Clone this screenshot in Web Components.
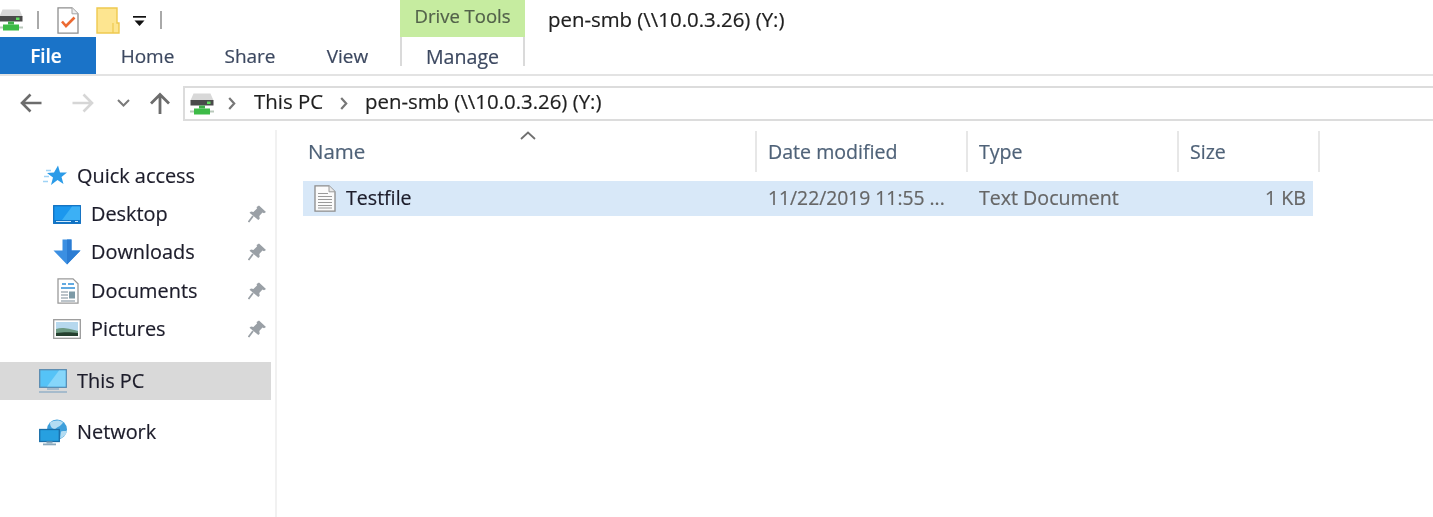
<!DOCTYPE html>
<html>
<head>
<meta charset="utf-8">
<title>pen-smb</title>
<style>
  html, body { margin: 0; height: 100%; background: #fff; overflow: hidden; }
  body { font: 19.6px "Open Sans", "Noto Sans", sans-serif; color: #1a1a1a; -webkit-text-stroke: 0.2px; }
  ex-window { filter: blur(0.45px); }
</style>
</head>
<body>
<ex-window></ex-window>

<script>
const ICONS = {
  drive: `<svg width="24" height="23" viewBox="0 0 24 23">
    <path d="M3.500 .5h17l3 7H.5z" fill="#d8d8d8"/>
    <rect x=".5" y="7" width="23" height="5.500" fill="#4a4a4a"/>
    <rect x="17" y="8.500" width="3.500" height="2.500" fill="#5fdc5f"/>
    <rect x="9" y="12.500" width="6" height="3" fill="#3fae49"/>
    <rect x="4" y="15.500" width="16" height="6" fill="#3dbb47"/>
    <rect x="0" y="17.500" width="4" height="2" fill="#b9c9bb"/>
    <rect x="20" y="17.500" width="4" height="2" fill="#b9c9bb"/>
  </svg>`,
  checklist: `<svg width="22" height="27" viewBox="0 0 22 27">
    <path d="M1 .8h14l6 6v19.400H1z" fill="#fff" stroke="#8e8e8e" stroke-width="1.300"/>
    <path d="M15 .8v6h6" fill="#eee" stroke="#a5a5a5"/>
    <path d="M5 14.500l4 4.500 8.500-8.500" fill="none" stroke="#ec6a32" stroke-width="2.600"/>
  </svg>`,
  folder: `<svg width="24" height="27" viewBox="0 0 24 27">
    <path d="M1 1h20v15h2v10H1z" fill="#fde590" stroke="#eec94f" stroke-width="1.400"/>
    <path d="M17 16v10" stroke="#eec94f" stroke-width="1.200"/>
  </svg>`,
  dropdown: `<svg width="13" height="11" viewBox="0 0 13 11">
    <rect x="0" y="0" width="13" height="1.700" fill="#111"/>
    <path d="M1.500 4.500h10L6.500 10z" fill="#111"/>
  </svg>`,
  back: `<svg width="22" height="20" viewBox="0 0 22 20"><path d="M21.500 10H2.500M10.500 1.500L2 10l8.500 8.500" fill="none" stroke="currentColor" stroke-width="2.600"/></svg>`,
  forward: `<svg width="22" height="20" viewBox="0 0 22 20"><path d="M.5 10h19M11.500 1.500L20 10l-8.500 8.500" fill="none" stroke="currentColor" stroke-width="2.600"/></svg>`,
  up: `<svg width="22" height="22" viewBox="0 0 22 22"><path d="M11 22V3M2 11.500L11 2.500l9 9" fill="none" stroke="currentColor" stroke-width="2.800"/></svg>`,
  chevdown: `<svg width="13" height="8" viewBox="0 0 13 8"><path d="M1 1l5.500 5.500L12 1" fill="none" stroke="currentColor" stroke-width="2"/></svg>`,
  chevright: `<svg width="8" height="13" viewBox="0 0 8 13"><path d="M1.200 1l5 5.500-5 5.500" fill="none" stroke="currentColor" stroke-width="2.200"/></svg>`,
  star: `<svg width="24" height="22" viewBox="0 0 24 22">
    <path d="M15 .5l2 7h7l-5.500 4.500 2 7-6-4-6.500 5 2-7.500-6-4.500 7-.5z" fill="#2b9be8"/>
    <path d="M0 16.500h5M1 11.500h5M3 5.500h5" stroke="#9fd3f5" stroke-width="1.300"/>
  </svg>`,
  desktop: `<svg width="28" height="19" viewBox="0 0 28 19">
    <rect x=".7" y=".7" width="26.600" height="17.600" fill="#1b97ee" stroke="#0f6fc0" stroke-width="1.300"/>
    <path d="M19 1.500L9 15h18V1.500z" fill="#3cb0f5"/>
    <rect x="1.500" y="15" width="25" height="3" fill="#0f72c4"/>
    <rect x="3" y="16" width="15" height="1" fill="#cfe9fb"/>
    <rect x="22" y="16" width="3" height="1" fill="#cfe9fb"/>
  </svg>`,
  downloads: `<svg width="28" height="26" viewBox="0 0 28 26">
    <path d="M9.500 .5h9v11h9L14 25.500.5 11.500h9z" fill="#3b8fe2"/>
    <path d="M14 .5h4.500v11h9L14 25.500z" fill="#2b7cd3"/>
  </svg>`,
  documents: `<svg width="22" height="26" viewBox="0 0 22 26">
    <path d="M1 .8h15l5 5v19.400H1z" fill="#fff" stroke="#9a9a9a" stroke-width="1.300"/>
    <path d="M5 6h4M11 6h6M4 10h14" stroke="#2f8fd8" stroke-width="1.500"/>
    <path d="M4 14h7M4 17h7M4 20h7M4 23h14" stroke="#7a8a96" stroke-width="1.200"/>
    <rect x="12" y="13.500" width="6" height="7" fill="#7d9aa6"/>
  </svg>`,
  pictures: `<svg width="28" height="20" viewBox="0 0 28 20">
    <rect x=".7" y=".7" width="26.600" height="18.600" fill="#fff" stroke="#9a9a9a" stroke-width="1.300"/>
    <rect x="3" y="3" width="22" height="14" fill="#b6d8ee"/>
    <path d="M3 10c6-2 11-1 22 2v5H3z" fill="#6d9a83"/>
    <path d="M3 14c8-1 14-1 22 0v3H3z" fill="#25402f"/>
  </svg>`,
  pc: `<svg width="28" height="24" viewBox="0 0 28 24">
    <rect x=".7" y=".7" width="26.600" height="17.600" fill="#55c3f7" stroke="#5a8bb0" stroke-width="1.300"/>
    <path d="M20 1.500L8 17.500h18.500v-16z" fill="#86d6fa"/>
    <rect x="8" y="19" width="12" height="2" fill="#a6bbcc"/>
    <rect x="0" y="22" width="28" height="2" fill="#a6bbcc"/>
  </svg>`,
  network: `<svg width="28" height="27" viewBox="0 0 28 27">
    <circle cx="18" cy="10.500" r="10" fill="#3d9fdb"/>
    <path d="M11 3.500c4-2 9-3 13 0-2 4-6 4-8 7-3-1-5-3-5-7zM22 12.500c3-1 5 0 6-1-1 5-4 7-7 8z" fill="#b3dcf2"/>
    <rect x=".7" y="10.500" width="19.600" height="12" fill="#27a0e0" stroke="#1a6ea8" stroke-width="1.300"/>
    <rect x="7.500" y="22.500" width="6" height="2" fill="#8aa8bc"/>
    <rect x="4" y="24.500" width="13" height="1.800" fill="#8aa8bc"/>
  </svg>`,
  pin: `<svg width="18" height="18" viewBox="0 0 18 18">
    <path d="M11 .5l7 6.500-2 1.200-1.500-.6-3.200 3.500.4 2.600-1.400 1.400L1.500 7.800 3 6.400l2.400.5L9 3.600l-.4-1.500z" fill="#9aa0a6"/>
    <path d="M5 11l-4.500 6" stroke="#9aa0a6" stroke-width="1.800"/>
  </svg>`,
  textfile: `<svg width="22" height="27" viewBox="0 0 22 27">
    <path d="M1 .8h14l6 6v19.400H1z" fill="#fbfbfb" stroke="#8b8b8b" stroke-width="1.300"/>
    <path d="M15 .8v6h6" fill="#e8e8e8" stroke="#9a9a9a"/>
    <path d="M4 8.500h10M4 11.500h14M4 14.500h14M4 17.500h14M4 20.500h14M4 23h14" stroke="#9a9a9a" stroke-width="1.200"/>
  </svg>`
};

class ExIcon extends HTMLElement {
  constructor() {
    super();
    this.attachShadow({ mode: 'open' }).innerHTML = `
      <style>
        :host { display: inline-flex; flex: none; }
        svg { display: block; }
      </style>
      ${ICONS[this.getAttribute('name')] || ''}
    `;
  }
}
customElements.define('ex-icon', ExIcon);

class ExRibbon extends HTMLElement {
  constructor() {
    super();
    this.attachShadow({ mode: 'open' }).innerHTML = `
      <style>
        :host { display: block; border-bottom: 2px solid #e3e3e3; height: 74px; }
        .top, .tabs { display: flex; height: 37px; }
        .qa { width: 400px; display: flex; align-items: center; box-sizing: border-box; height: 40px; }
        .sep { width: 2px; height: 18px; background: #a9a9a9; }
        .context { width: 125px; background: #c6eca0; color: #52614a; text-align: center; font-size: 18.500px; line-height: 31px; }
        .title { margin-left: 23px; line-height: 39px; color: #202020; font-size: 20.400px; }
        .file { width: 96px; box-sizing: border-box; padding-right: 4px; background: #1a73c8; color: #fff; font-weight: 600; font-size: 19px; text-align: center; line-height: 38px; }
        .tab { text-align: center; color: #3c4860; line-height: 39px; font-size: 19px; }
        .manage { width: 125px; box-sizing: border-box; border-left: 2px solid #dadada; border-right: 2px solid #dadada; height: 29px; text-align: center; color: #3c4860; line-height: 39px; }
      </style>
      <div class="top">
        <div class="qa">
          <ex-icon name="drive" style="margin-left:-1px"></ex-icon>
          <span class="sep" style="margin-left:14px"></span>
          <ex-icon name="checklist" style="margin-left:18px"></ex-icon>
          <ex-icon name="folder" style="margin-left:17px"></ex-icon>
          <ex-icon name="dropdown" style="margin-left:13px;margin-top:2px"></ex-icon>
          <span class="sep" style="margin-left:14px"></span>
        </div>
        <div class="context">Drive Tools</div>
        <div class="title">pen-smb (\\\\10.0.3.26) (Y:)</div>
      </div>
      <div class="tabs">
        <div class="file">File</div>
        <div class="tab" style="width:103px">Home</div>
        <div class="tab" style="width:102px">Share</div>
        <div class="tab" style="width:93px">View</div>
        <div class="manage" style="margin-left:6px">Manage</div>
      </div>
    `;
  }
}
customElements.define('ex-ribbon', ExRibbon);

class ExAddress extends HTMLElement {
  constructor() {
    super();
    this.attachShadow({ mode: 'open' }).innerHTML = `
      <style>
        :host { display: flex; align-items: center; height: 54px; padding-left: 20px; box-sizing: border-box; color: #6c6c6c; }
        .fwd { color: #d6d6d6; margin-left: 30px; }
        .down { margin-left: 23px; color: #7a7a7a; }
        .up { margin-left: 19px; }
        .box { margin-left: 12px; flex: 1; margin-right: -3px; height: 35px; box-sizing: border-box; border: 2px solid #dcdcdc; display: flex; align-items: center; padding-left: 5px; color: #1f1f1f; font-size: 20.400px; }
        .chev { color: #777; display: inline-flex; }
        span { position: relative; top: -2px; }
      </style>
      <ex-icon class="back" name="back"></ex-icon>
      <ex-icon class="fwd" name="forward"></ex-icon>
      <ex-icon class="down" name="chevdown"></ex-icon>
      <ex-icon class="up" name="up"></ex-icon>
      <div class="box">
        <ex-icon name="drive" style="margin-top:2px"></ex-icon>
        <ex-icon class="chev" name="chevright" style="margin-left:14px"></ex-icon>
        <span style="margin-left:18px">This PC</span>
        <ex-icon class="chev" name="chevright" style="margin-left:17px"></ex-icon>
        <span style="margin-left:17px">pen-smb (\\\\10.0.3.26) (Y:)</span>
      </div>
    `;
  }
}
customElements.define('ex-address', ExAddress);

class ExNavItem extends HTMLElement {
  constructor() {
    super();
    const pin = this.hasAttribute('pinned') ? '<ex-icon class="pin" name="pin"></ex-icon>' : '';
    this.attachShadow({ mode: 'open' }).innerHTML = `
      <style>
        :host { display: flex; align-items: center; position: relative; height: 38px; width: 271px; box-sizing: border-box; color: #1c1c2a; font-size: 19.900px; }
        :host([selected]) { background: #d9d9d9; }
        .icon { width: var(--icon-w, 38px); margin-left: var(--indent, 39px); display: flex; align-items: center; }
        .label { margin-top: -2px; }
        .pin { position: absolute; left: 248px; }
      </style>
      <div class="icon"><ex-icon name="${this.getAttribute('icon')}"></ex-icon></div>
      <span class="label"><slot></slot></span>
      ${pin}
    `;
  }
}
customElements.define('ex-nav-item', ExNavItem);

class ExNav extends HTMLElement {
  constructor() {
    super();
    this.attachShadow({ mode: 'open' }).innerHTML = `
      <style>
        :host { display: block; width: 275px; border-right: 2px solid #f1f1f1; padding-top: 27px; flex: none; }
        .sub { --indent: 53px; --icon-w: 38px; }
        .gap { height: 14px; }
        .gap2 { height: 13px; }
      </style>
      <ex-nav-item icon="star" style="--indent:43px;--icon-w:34px">Quick access</ex-nav-item>
      <ex-nav-item class="sub" icon="desktop" pinned>Desktop</ex-nav-item>
      <ex-nav-item class="sub" icon="downloads" pinned>Downloads</ex-nav-item>
      <ex-nav-item class="sub" icon="documents" pinned style="--indent:57px;--icon-w:34px;margin-top:1px">Documents</ex-nav-item>
      <ex-nav-item class="sub" icon="pictures" pinned>Pictures</ex-nav-item>
      <div class="gap"></div>
      <ex-nav-item icon="pc" selected>This PC</ex-nav-item>
      <div class="gap2"></div>
      <ex-nav-item icon="network">Network</ex-nav-item>
    `;
  }
}
customElements.define('ex-nav', ExNav);

class ExFileList extends HTMLElement {
  constructor() {
    super();
    this.attachShadow({ mode: 'open' }).innerHTML = `
      <style>
        :host { display: block; position: relative; flex: 1; padding: 1px 0 0 26px; }
        .sort { position: absolute; left: 243px; top: 1px; color: #707070; }
        .head { display: grid; grid-template-columns: 454px 211px 211px 141px; height: 41px; color: #4f6278; width: 1017px; }
        .head div { padding-left: 11px; line-height: 41px; border-right: 2px solid #e7e7e7; box-sizing: border-box; }
        .head div:first-child { padding-left: 5px; font-size: 20.500px; }
        .row { display: grid; grid-template-columns: 454px 211px 211px 134px; height: 35px; margin-top: 9px; background: #d8e8f8; width: 1010px; align-items: center; color: #666; }
        .row > div { padding-left: 11px; margin-top: -2px; }
        .name { display: flex; align-items: center; color: #1c1c2a; gap: 10px; padding-left: 11px; }
        .name ex-icon { margin-top: 2px; }
        .date { font-size: 19.300px; }
        .size { text-align: right; padding-right: 7px; }
      </style>
      <svg class="sort" width="16" height="9" viewBox="0 0 16 9"><path d="M1 8l7-6.500L15 8" fill="none" stroke="currentColor" stroke-width="1.800"/></svg>
      <div class="head">
        <div>Name</div>
        <div>Date modified</div>
        <div>Type</div>
        <div>Size</div>
      </div>
      <div class="row">
        <div class="name"><ex-icon name="textfile"></ex-icon><span>Testfile</span></div>
        <div class="date">11/22/2019 11:55 ...</div>
        <div>Text Document</div>
        <div class="size">1 KB</div>
      </div>
    `;
  }
}
customElements.define('ex-file-list', ExFileList);

class ExWindow extends HTMLElement {
  constructor() {
    super();
    this.attachShadow({ mode: 'open' }).innerHTML = `
      <style>
        :host { display: flex; flex-direction: column; height: 100vh; overflow: hidden; }
        .body { display: flex; flex: 1; min-height: 0; }
      </style>
      <ex-ribbon></ex-ribbon>
      <ex-address></ex-address>
      <div class="body">
        <ex-nav></ex-nav>
        <ex-file-list></ex-file-list>
      </div>
    `;
  }
}
customElements.define('ex-window', ExWindow);
</script>
</body>
</html>
